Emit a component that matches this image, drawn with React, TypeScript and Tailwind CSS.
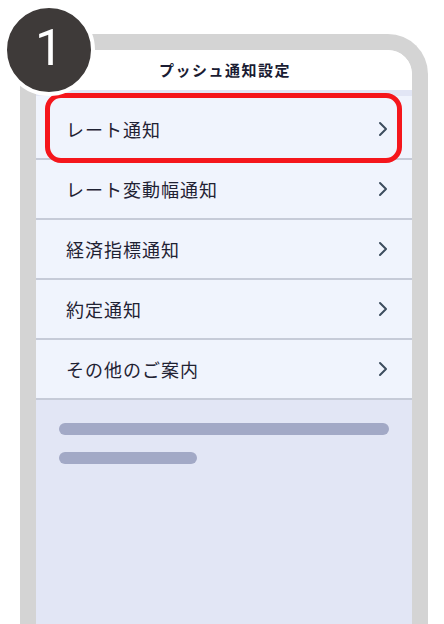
const rows = ["レート通知", "レート変動幅通知", "経済指標通知", "約定通知", "その他のご案内"];

function Chevron() {
  return (
    <svg width="10" height="16" viewBox="0 0 10 16" fill="none">
      <path d="M2 2l6 6-6 6" stroke="#3d4d5e" strokeWidth="2" strokeLinecap="round" strokeLinejoin="round" />
    </svg>
  );
}

export default function App() {
  return (
    <div
      className="relative h-[624px] w-[444px] overflow-hidden bg-white"
      style={{ fontFamily: '"Noto Sans CJK JP", "Noto Sans", sans-serif' }}
    >
      <div className="ml-[20px] mt-[34px] flex h-[590px] w-[408px] flex-col overflow-hidden rounded-t-[40px] border-[16px] border-b-0 border-[#d4d4d4]">
        <div className="flex h-[40px] shrink-0 items-center justify-center rounded-t-[24px] bg-white pl-[2px]">
          <span className="text-[15px] font-bold tracking-[1.5px] text-[#1a1c33]">
            プッシュ通知設定
          </span>
        </div>
        <div className="h-[6px] shrink-0 bg-[#e2e6f5]" />
        <div className="shrink-0">
          {rows.map((label, index) => (
            <div
              key={label}
              className={`flex items-center justify-between border-b-2 border-[#c6cbd8] bg-[#f0f4fd] pl-[30px] pr-[24px] ${
                index === 0 ? "h-[64px] pt-[4px]" : "h-[60px]"
              }`}
            >
              <span className="text-[18px] tracking-[1px] text-[#1f2233]">{label}</span>
              <Chevron />
            </div>
          ))}
        </div>
        <div className="flex flex-1 flex-col gap-[17px] bg-[#e2e6f5] px-[23px] pt-[23px]">
          <div className="h-[12px] w-full rounded-full bg-[#a2a9c6]" />
          <div className="h-[12px] w-[138px] rounded-full bg-[#a2a9c6]" />
        </div>
      </div>

      <div className="pointer-events-none absolute left-[45px] top-[93px] h-[70px] w-[357px] rounded-[16px] border-[5px] border-[#f5161c]" />

      <div className="absolute left-[3px] top-[4px] flex h-[92px] w-[92px] items-center justify-center rounded-full border-4 border-white bg-[#3e3a39]">
        <span
          className="mb-[4px] text-[50px] leading-none text-white"
          style={{ fontFamily: "Roboto, sans-serif" }}
        >
          1
        </span>
      </div>
    </div>
  );
}
